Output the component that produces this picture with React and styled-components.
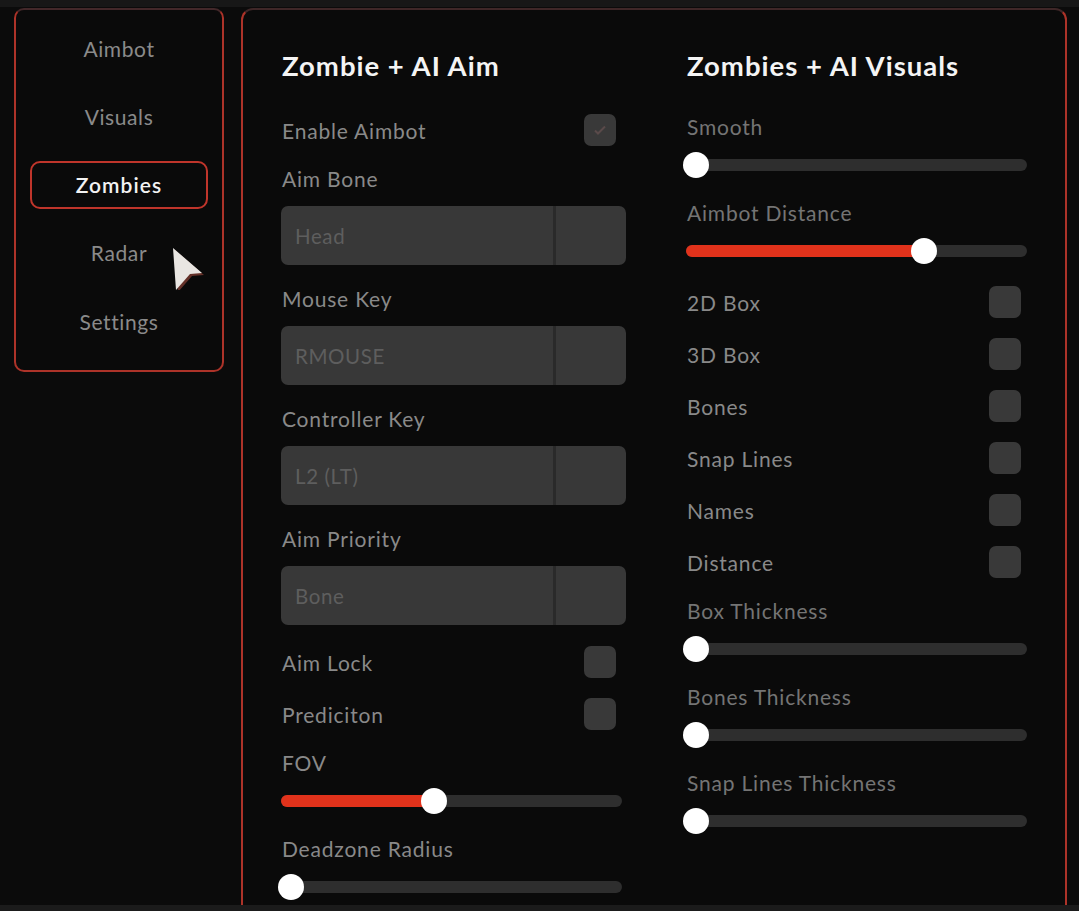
import React from 'react';
import styled, { createGlobalStyle } from 'styled-components';

const GlobalStyle = createGlobalStyle`
  html, body {
    margin: 0;
    padding: 0;
    background: #0b0b0b;
    overflow: hidden;
  }
  * { box-sizing: border-box; }
  body {
    font-family: Lato, "Open Sans", sans-serif;
  }
`;

const Page = styled.div`
  width: 1079px;
  height: 911px;
  background: linear-gradient(to bottom, #171717 0, #171717 7px, #0b0b0b 7px, #0b0b0b 905px, #1b1b1b 905px);
`;

const Stage = styled.div`
  height: 905px;
  overflow: hidden;
  display: flex;
  align-items: flex-start;
  gap: 17px;
  padding: 8px 12px 0 14px;
`;

const Sidebar = styled.nav`
  position: relative;
  width: 210px;
  height: 364px;
  flex-shrink: 0;
  display: flex;
  flex-direction: column;
  gap: 20.3px;
  padding: 14px 14px 0;
  background: #0a0a0a;
  border: 2px solid #ad3329;
  border-top-color: #43282a;
  border-radius: 10px;
`;

const NavItem = styled.div`
  height: 48px;
  display: flex;
  align-items: center;
  justify-content: center;
  font-size: 21px;
  letter-spacing: ${p => (p.$active ? '1.1px' : '0.6px')};
  color: ${p => (p.$active ? '#f2f2f2' : '#8a8a8a')};
  font-weight: ${p => (p.$active ? 600 : 400)};
  border: 2px solid ${p => (p.$active ? '#c0352b' : 'transparent')};
  border-radius: 10px;
`;

const Cursor = styled.svg`
  position: absolute;
  left: 156px;
  top: 230px;
`;

const Panel = styled.main`
  width: 826px;
  height: 940px;
  flex-shrink: 0;
  display: flex;
  gap: 60px;
  padding: 40px 34px 0 38px;
  background: #0a0a0a;
  border: 2px solid #ad3329;
  border-top-color: #3f2728;
  border-radius: 12px;
`;

const Column = styled.section`
  width: 345px;
  display: flex;
  flex-direction: column;
`;

const Title = styled.h2`
  margin: 0 0 0 1px;
  height: 32px;
  line-height: 32px;
  font-size: 27.5px;
  font-weight: 700;
  color: #f4f4f4;
  letter-spacing: 1px;
  white-space: nowrap;
`;

const Label = styled.div`
  height: 24px;
  line-height: 24px;
  font-size: 21px;
  letter-spacing: 0.8px;
  color: ${p => (p.$dim ? '#747474' : '#898989')};
  margin-top: ${p => p.$mt}px;
  padding-left: 1px;
  white-space: nowrap;
`;

const CheckRow = styled.div`
  height: 32px;
  display: flex;
  align-items: center;
  justify-content: space-between;
  margin-top: ${p => p.$mt}px;
  padding-right: 10px;
  font-size: 21px;
  letter-spacing: 0.8px;
  color: #898989;
  padding-left: 1px;
`;

const Box = styled.div`
  width: 32px;
  height: 32px;
  border-radius: 7px;
  background: #393939;
  display: flex;
  align-items: center;
  justify-content: center;
`;

const Select = styled.div`
  height: 59px;
  margin-top: 15px;
  display: flex;
  border-radius: 7px;
  overflow: hidden;
  background: #383838;
`;

const SelectValue = styled.div`
  flex: 1;
  display: flex;
  align-items: center;
  padding-left: 14px;
  font-size: 20.5px;
  letter-spacing: 0.6px;
  color: #5e5e5e;
  border-right: 3px solid #2a2a2a;
`;

const SelectArrow = styled.div`
  width: 70px;
`;

const Slider = styled.div`
  position: relative;
  height: 26px;
  margin-top: 13px;
  margin-right: 4px;
  display: flex;
  align-items: center;
`;

const Track = styled.div`
  position: relative;
  width: 100%;
  height: 12px;
  border-radius: 6px;
  background: #2e2e2e;
`;

const Fill = styled.div`
  position: absolute;
  left: 0;
  top: 0;
  bottom: 0;
  border-radius: 6px;
  background: #e1321b;
`;

const Thumb = styled.div`
  position: absolute;
  top: 50%;
  width: 26px;
  height: 26px;
  margin: -13px 0 0 -13px;
  border-radius: 50%;
  background: #ffffff;
`;

const Check = ({ label, mt, on }) => (
  <CheckRow $mt={mt}>
    <span>{label}</span>
    <Box>
      {on && (
        <svg width="16" height="16" viewBox="0 0 16 16">
          <path d="M3 8.5l3 3 7-7" fill="none" stroke="#5a4a4a" strokeWidth="2" />
        </svg>
      )}
    </Box>
  </CheckRow>
);

const Dropdown = ({ label, value, mt }) => (
  <>
    <Label $mt={mt}>{label}</Label>
    <Select>
      <SelectValue>{value}</SelectValue>
      <SelectArrow />
    </Select>
  </>
);

const Range = ({ label, value, mt, dim }) => {
  const pos = `calc(10px + (100% - 20px) * ${value})`;
  return (
    <>
      <Label $mt={mt} $dim={dim}>{label}</Label>
      <Slider>
        <Track>
          {value > 0 && <Fill style={{ width: pos }} />}
          <Thumb style={{ left: pos }} />
        </Track>
      </Slider>
    </>
  );
};

const navItems = ['Aimbot', 'Visuals', 'Zombies', 'Radar', 'Settings'];

export default function App() {
  return (
    <Page>
      <GlobalStyle />
      <Stage>
        <Sidebar>
          {navItems.map(n => (
            <NavItem key={n} $active={n === 'Zombies'}>{n}</NavItem>
          ))}
          <Cursor width="36" height="50" viewBox="0 0 36 50">
            <path d="M3 10 L32 35 L20 36 L6 52 Z" fill="#7a3a30" opacity="0.8" />
            <path d="M1 8 L30 33 L18 34 L4 50 Z" fill="#e9e6e2" />
          </Cursor>
        </Sidebar>
        <Panel>
          <Column>
            <Title>Zombie + AI Aim</Title>
            <Check label="Enable Aimbot" mt={32} on />
            <Dropdown label="Aim Bone" value="Head" mt={21} />
            <Dropdown label="Mouse Key" value="RMOUSE" mt={22} />
            <Dropdown label="Controller Key" value="L2 (LT)" mt={22} />
            <Dropdown label="Aim Priority" value="Bone" mt={22} />
            <Check label="Aim Lock" mt={21} />
            <Check label="Prediciton" mt={20} />
            <Range label="FOV" value={0.445} mt={21} />
            <Range label="Deadzone Radius" value={0} mt={23} />
          </Column>
          <Column>
            <Title>Zombies + AI Visuals</Title>
            <Range label="Smooth" value={0} mt={33} dim />
            <Range label="Aimbot Distance" value={0.71} mt={23} dim />
            <Check label="2D Box" mt={22} />
            <Check label="3D Box" mt={20} />
            <Check label="Bones" mt={20} />
            <Check label="Snap Lines" mt={20} />
            <Check label="Names" mt={20} />
            <Check label="Distance" mt={20} />
            <Range label="Box Thickness" value={0} mt={21} dim />
            <Range label="Bones Thickness" value={0} mt={23} dim />
            <Range label="Snap Lines Thickness" value={0} mt={23} dim />
          </Column>
        </Panel>
      </Stage>
    </Page>
  );
}
